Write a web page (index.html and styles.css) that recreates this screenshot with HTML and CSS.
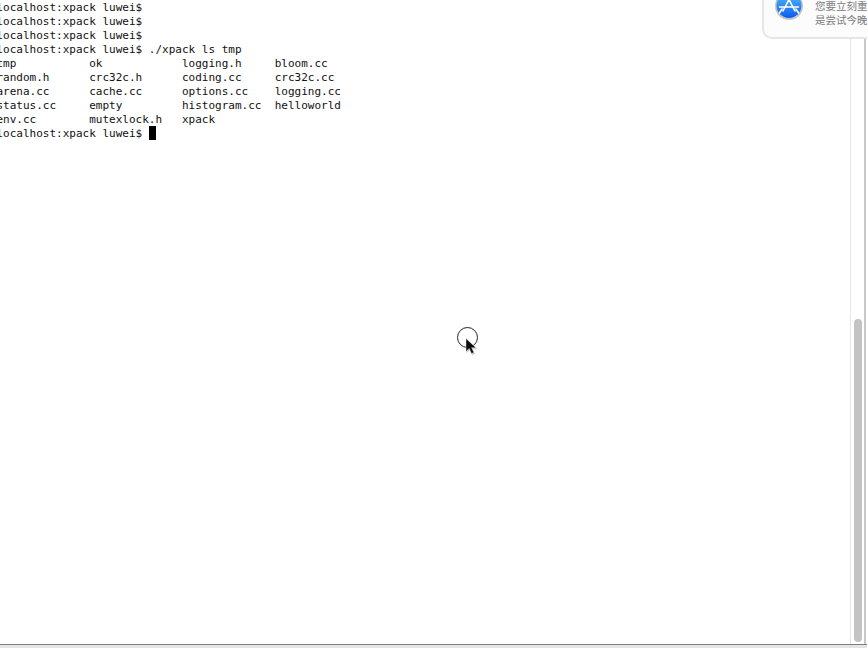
FILE: index.html
```html
<!DOCTYPE html>
<html lang="zh">
<head>
<meta charset="utf-8">
<title>Terminal</title>
<link rel="stylesheet" href="styles.css">
</head>
<body>
<div class="window">
  <main class="terminal">
    <pre class="output">localhost:xpack luwei$
localhost:xpack luwei$
localhost:xpack luwei$
localhost:xpack luwei$ ./xpack ls tmp
tmp           ok            logging.h     bloom.cc
random.h      crc32c.h      coding.cc     crc32c.cc
arena.cc      cache.cc      options.cc    logging.cc
status.cc     empty         histogram.cc  helloworld
env.cc        mutexlock.h   xpack
localhost:xpack luwei$ <span class="cursor"></span></pre>
    <svg class="pointer" viewBox="0 0 26 30" aria-hidden="true">
      <circle cx="10.500" cy="10.500" r="10" fill="#fff" stroke="#222" stroke-width="1"/>
      <path d="M9.500 13v13l3.200-3 2.300 5 3-1.300-2.300-4.700h4.500z" fill="#8a8a8a" opacity=".5"/>
      <path d="M9 11.500v13l3.200-3 2.300 5 2.400-1.100-2.300-4.700h4.400z" fill="#0d0d0d" stroke="#fff" stroke-width=".4"/>
    </svg>
  </main>
  <div class="scroll-track">
    <div class="scroll-thumb"></div>
  </div>
  <aside class="notice">
    <svg class="appicon" viewBox="0 0 28 28" aria-hidden="true">
      <defs>
        <linearGradient id="blue" x1="0" y1="0" x2="0" y2="1">
          <stop offset="0" stop-color="#58bcf9"/>
          <stop offset="1" stop-color="#0a5cee"/>
        </linearGradient>
      </defs>
      <circle cx="14" cy="14" r="14" fill="#c4c6c8"/>
      <circle cx="14" cy="13.500" r="12.500" fill="url(#blue)"/>
      <path d="M17 2 8 19M11 2l9 17M4.500 15h19M4.500 21l2.500-4M23.500 21l-2.500-4" fill="none" stroke="#fff" stroke-width="1.600" stroke-linecap="round"/>
    </svg>
    <div class="notice-text">
      <p>您要立刻重新启动</p>
      <p>是尝试今晚再安装</p>
    </div>
  </aside>
</div>
<footer class="bottom-bar"></footer>
</body>
</html>
```
FILE: styles.css
```css
html, body {
  margin: 0;
  height: 100%;
  overflow: hidden;
  background: #fff;
}

body {
  display: flex;
  flex-direction: column;
}

.window {
  position: relative;
  flex: 1;
  display: flex;
  min-height: 0;
  padding-right: 1px;
}

.terminal {
  position: relative;
  flex: 1;
  overflow: hidden;
  border-right: 1px solid #e6e6e6;
}

.output {
  margin: 1px 0 0 -3.500px;
  font: 11px/14px "DejaVu Sans Mono", monospace;
  color: #111;
}

.cursor {
  display: inline-block;
  width: 7px;
  height: 14px;
  margin-top: -2px;
  background: #000;
  vertical-align: -3px;
}

.notice {
  position: absolute;
  top: -12px;
  left: 762px;
  width: 125px;
  height: 51px;
  box-sizing: border-box;
  padding: 2px 0 0 11px;
  display: flex;
  gap: 12px;
  background: #fcfcfc;
  border: 2px solid #e6e6e6;
  border-radius: 10px;
  overflow: hidden;
}

.appicon {
  width: 28px;
  height: 28px;
  flex: none;
}

.notice-text {
  margin-top: 7px;
  white-space: nowrap;
  font: 10.500px/14px "Noto Sans CJK SC", sans-serif;
  color: #7b7b7b;
}

.notice-text p {
  margin: 0;
}

.pointer {
  position: absolute;
  left: 457px;
  top: 327px;
  width: 26px;
  height: 30px;
}

.scroll-track {
  width: 15px;
  flex: none;
  background: #fff;
  border-right: 2px solid #c8c8c8;
  box-sizing: border-box;
  padding: 319px 2px 0 3px;
}

.scroll-thumb {
  height: 323px;
  background: #c4c4c4;
  border-radius: 4px;
}

.bottom-bar {
  height: 3px;
  flex: none;
  background: #e4e4e4;
  border-top: 1px solid #7f7f7f;
}
```
